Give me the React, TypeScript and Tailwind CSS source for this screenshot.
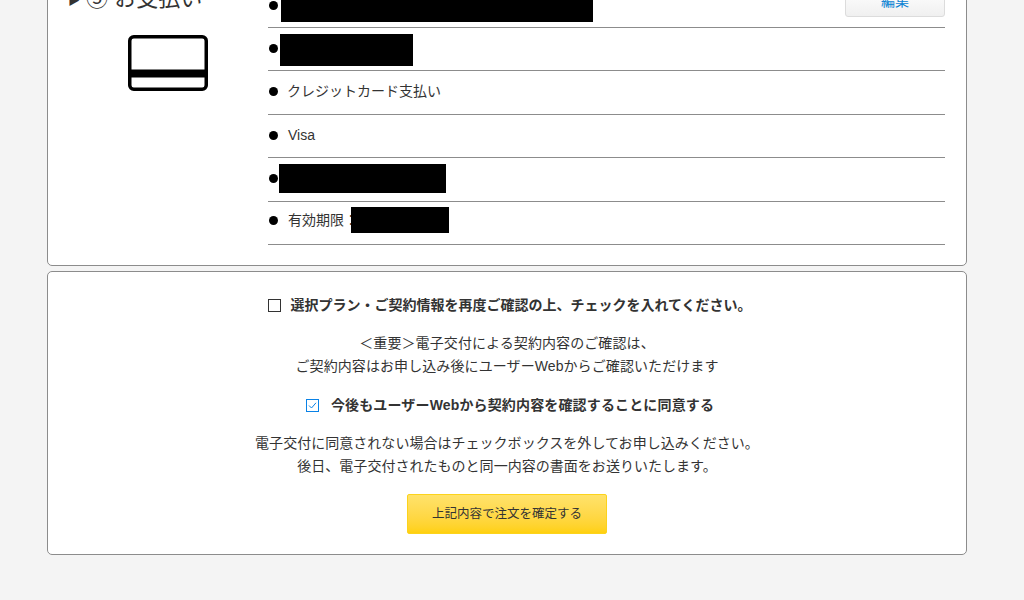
const font = "font-['Liberation_Sans','Noto_Sans_CJK_JP',sans-serif]";

function Row({ children, className = "pb-[2px]" }: { children: React.ReactNode; className?: string }) {
  return (
    <li className={`flex items-center h-[43.4px] border-b border-[#8c8c8c] ${className}`}>
      <span className="w-[9px] h-[9px] rounded-full bg-black ml-[1px] shrink-0" />
      {children}
    </li>
  );
}

function Redact({ w, h, className }: { w: number; h: number; className: string }) {
  return <span className={`block bg-black shrink-0 ${className}`} style={{ width: w, height: h }} />;
}

export default function App() {
  return (
    <div className={`h-[600px] w-[1024px] overflow-hidden bg-[#f4f4f4] text-[14px] text-[#333] ${font}`}>
      <div className="ml-[47px] w-[920px] -mt-[17px]">
        <section className="flex h-[283px] rounded-[5px] border border-[#8c8c8c] bg-white">
          <div className="w-[220px] shrink-0">
            <h2 className="ml-[20px] flex items-center h-[28px] text-[22px] text-[#333]">
              <span className="text-[12px] mr-[6px] pt-[6px]">▶</span>⑤ お支払い
            </h2>
            <svg className="ml-[80px] mt-[23px]" width="80" height="56" viewBox="0 0 80 56" fill="none">
              <rect x="1.75" y="1.75" width="76.5" height="52.5" rx="4" stroke="#000" strokeWidth="3.5" />
              <rect x="2" y="34.5" width="76" height="8" fill="#000" />
            </svg>
          </div>
          <div className="w-[677px]">
            <div className="relative">
              <ul>
                <li className="flex items-center h-[44px] border-b border-[#8c8c8c]">
                  <span className="w-[9px] h-[9px] rounded-full bg-black ml-[1px] shrink-0" />
                  <Redact w={312} h={33} className="ml-[3px]" />
                </li>
                <Row className="pb-[1px]"><Redact w={133} h={32} className="ml-[2px] mt-[2px]" /></Row>
                <Row><span className="ml-[9px]">クレジットカード支払い</span></Row>
                <Row className="pb-[1px]"><span className="ml-[10px]">Visa</span></Row>
                <Row><Redact w={167} h={29} className="ml-[1px]" /></Row>
                <Row className="pb-[4px]">
                  <span className="ml-[10px]">有効期限：</span>
                  <Redact w={98} h={26} className="-ml-[7px] -mt-[1px]" />
                </Row>
              </ul>
              <button className="absolute right-0 top-[3px] h-[30px] w-[100px] pb-[2px] rounded-[3px] border border-[#dcdcdc] bg-gradient-to-b from-white to-[#f0f0f0] text-[14px] text-[#0a82d2]">
                編集
              </button>
            </div>
          </div>
        </section>

        <section className="mt-[5px] h-[284px] rounded-[5px] border border-[#8c8c8c] bg-white flex flex-col items-center">
          <label className="mt-[23px] ml-[6px] flex items-center h-[20px] font-bold text-[14px]">
            <span className="w-[13px] h-[13px] border border-[#333] mr-[9px]" />
            選択プラン・ご契約情報を再度ご確認の上、チェックを入れてください。
          </label>
          <p className="mt-[17px] text-center leading-[23px] tracking-[0.09px]">
            ＜重要＞電子交付による契約内容のご確認は、
            <br />
            ご契約内容はお申し込み後にユーザーWebからご確認いただけます
          </p>
          <label className="mt-[17px] ml-[6px] flex items-center h-[20px] font-bold text-[14px] tracking-[0.15px]">
            <span className="flex w-[13px] h-[13px] mr-[12px] border border-[#0a82e6] bg-white">
              <svg width="11" height="11" viewBox="0 0 11 11" fill="none">
                <path d="M2 5.5 L4.5 8 L9 2.8" stroke="#0a82e6" strokeWidth="1" />
              </svg>
            </span>
            今後もユーザーWebから契約内容を確認することに同意する
          </label>
          <p className="mt-[17px] text-center leading-[23px] tracking-[0.03px]">
            電子交付に同意されない場合はチェックボックスを外してお申し込みください。
            <br />
            後日、電子交付されたものと同一内容の書面をお送りいたします。
          </p>
          <button className="mt-[16px] h-[40px] w-[200px] pt-[1px] rounded-[2px] border border-[#fcd31c] bg-gradient-to-b from-[#ffe26a] to-[#ffd00c] text-[12.5px] text-[#333]">
            上記内容で注文を確定する
          </button>
        </section>
      </div>
    </div>
  );
}
